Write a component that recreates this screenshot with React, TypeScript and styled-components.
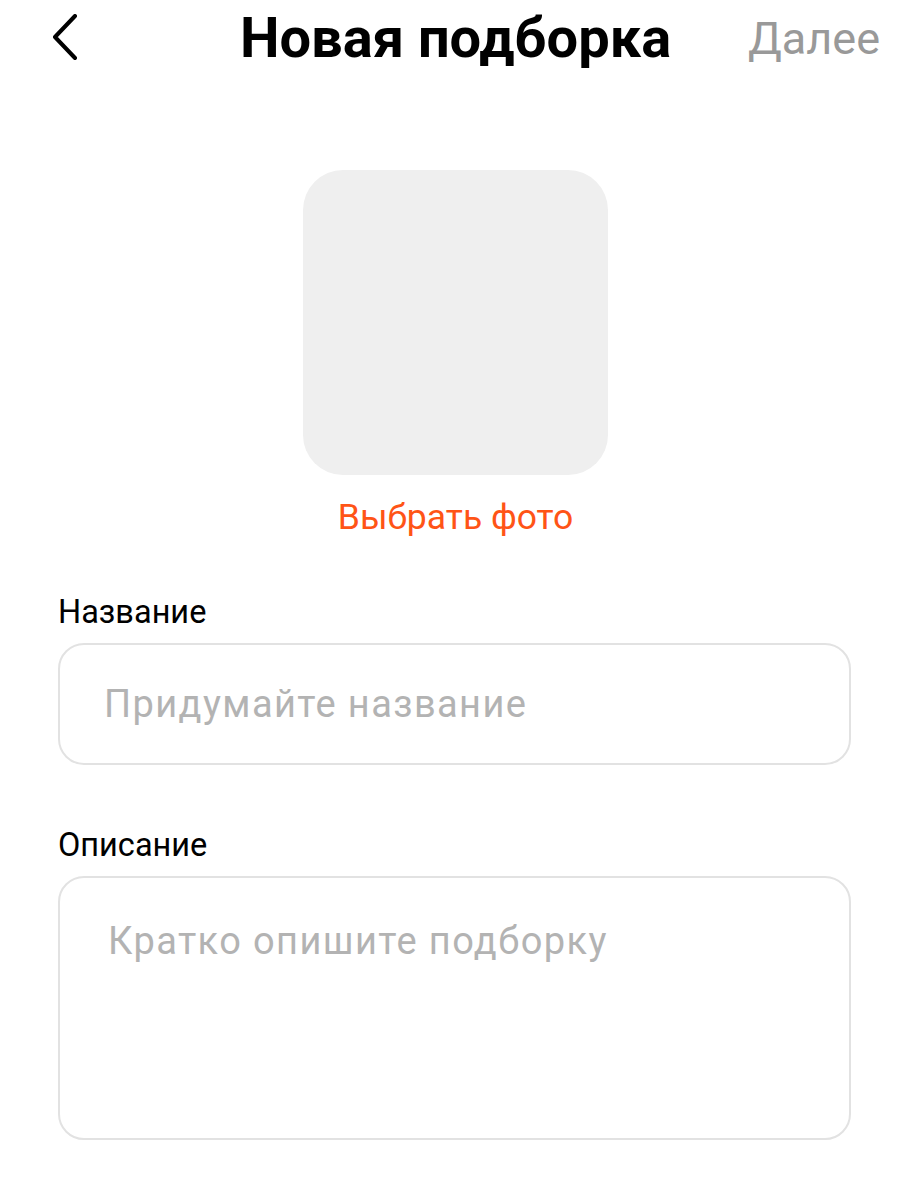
import React from "react";
import styled, { createGlobalStyle } from "styled-components";

const Global = createGlobalStyle`
  html, body { margin: 0; padding: 0; background: #ffffff; }
  body { font-family: Roboto, "Noto Sans", sans-serif; color: #000; }
  * { box-sizing: border-box; }
`;

const Screen = styled.div`
  width: 911px;
  min-height: 1200px;
  background: #fff;
  display: flex;
  flex-direction: column;
`;

const Header = styled.header`
  height: 76px;
  display: grid;
  grid-template-columns: 1fr auto 1fr;
  align-items: center;
  padding: 0 31px;
`;

const BackButton = styled.button`
  justify-self: start;
  margin-left: 18px;
  border: none;
  background: none;
  padding: 0;
  width: 32px;
  height: 48px;
  display: flex;
  align-items: center;
  justify-content: center;
  cursor: pointer;
`;

const Title = styled.h1`
  margin: 0;
  text-align: center;
  font-size: 56px;
  font-weight: 700;
  line-height: 1;
  color: #000;
`;

const NextLink = styled.span`
  justify-self: end;
  font-size: 45px;
  line-height: 1;
  color: #999999;
`;

const PhotoSection = styled.section`
  display: flex;
  flex-direction: column;
  align-items: center;
  margin-top: 94px;
  gap: 21px;
`;

const PhotoBox = styled.div`
  width: 305px;
  height: 305px;
  border-radius: 40px;
  background: #efefef;
`;

const PickPhoto = styled.span`
  font-size: 35.5px;
  line-height: 42px;
  color: #ff5416;
`;

const Form = styled.form`
  display: flex;
  flex-direction: column;
  padding: 0 60px 0 58px;
  margin-top: 55px;
  gap: 61px;
`;

const Field = styled.label`
  display: flex;
  flex-direction: column;
  gap: 12px;
`;

const FieldLabel = styled.span`
  font-size: 32.5px;
  line-height: 38px;
  color: #000;
`;

const boxStyles = `
  width: 100%;
  border: 2px solid #e2e2e2;
  border-radius: 26px;
  background: #fff;
  font-family: Roboto, "Noto Sans", sans-serif;
  font-size: 38px;
  letter-spacing: 1.4px;
  color: #000;
  outline: none;
  &::placeholder { color: #b3b3b3; }
`;

const TextInput = styled.input`
  ${boxStyles}
  height: 122px;
  padding: 0 44px;
`;

const TextArea = styled.textarea`
  ${boxStyles}
  height: 264px;
  padding: 41px 48px;
  line-height: 45px;
  resize: none;
`;

export default function App() {
  return (
    <Screen>
      <Global />
      <Header>
        <BackButton type="button" aria-label="Назад">
          <svg width="28" height="48" viewBox="0 0 28 48" fill="none">
            <path d="M24 2 L4 23 L24 44" stroke="#000" strokeWidth="4" strokeLinecap="round" strokeLinejoin="round" />
          </svg>
        </BackButton>
        <Title>Новая подборка</Title>
        <NextLink>Далее</NextLink>
      </Header>
      <PhotoSection>
        <PhotoBox />
        <PickPhoto>Выбрать фото</PickPhoto>
      </PhotoSection>
      <Form>
        <Field>
          <FieldLabel>Название</FieldLabel>
          <TextInput placeholder="Придумайте название" />
        </Field>
        <Field>
          <FieldLabel>Описание</FieldLabel>
          <TextArea placeholder="Кратко опишите подборку" />
        </Field>
      </Form>
    </Screen>
  );
}
